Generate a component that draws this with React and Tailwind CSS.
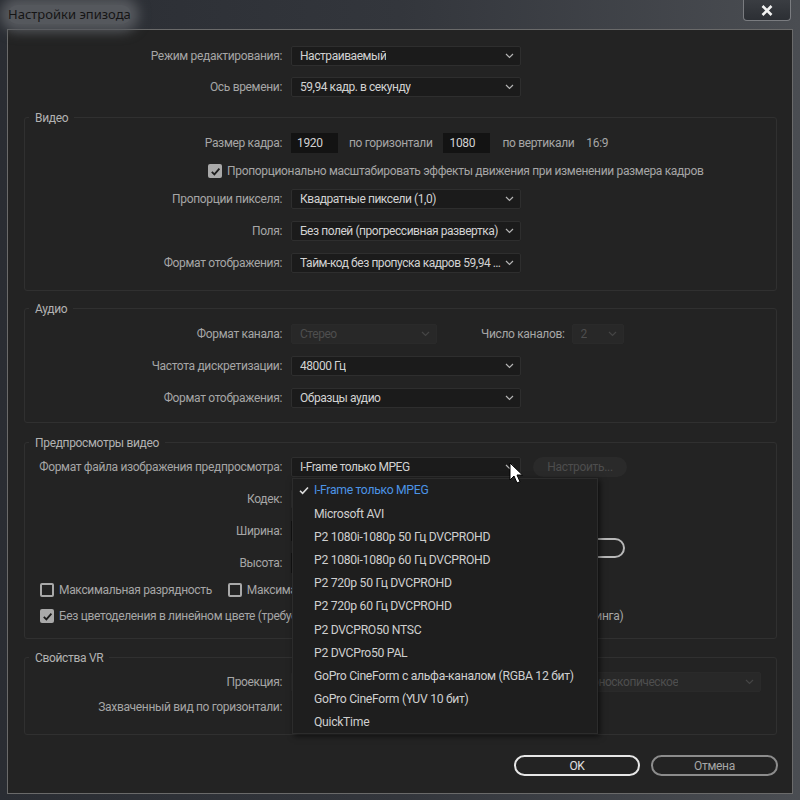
import React from "react";

const Chevron = ({ color = "#b4b4b4" }) => (
  <svg width="9" height="6" viewBox="0 0 9 6" className="shrink-0">
    <path d="M1 1l3.5 3.5L8 1" fill="none" stroke={color} strokeWidth="1.2" />
  </svg>
);

const Select = ({ value, w = "w-[230px]", disabled }) => (
  <div
    className={`${w} h-[20px] shrink-0 flex items-center justify-between gap-[3px] pl-[8px] pr-[6px] rounded-[2px] border tracking-[-0.45px] ${
      disabled
        ? "bg-[#282828] border-[#2a2a2a] text-[#4e4e4e]"
        : "bg-[#1b1b1b] border-[#2e2e2e] text-[#d2d2d2]"
    }`}
  >
    <span className="truncate">{value}</span>
    <Chevron color={disabled ? "#454545" : "#b4b4b4"} />
  </div>
);

const Check = ({ checked }) => (
  <div
    className={`w-[14px] h-[14px] shrink-0 rounded-[2px] flex items-center justify-center ${
      checked ? "bg-[#a9a9a9]" : "border-2 border-[#a9a9a9]"
    }`}
  >
    {checked && (
      <svg width="11" height="11" viewBox="0 0 11 11">
        <path d="M1.8 5.8l2.6 2.6L9.4 2.6" fill="none" stroke="#1c1c1c" strokeWidth="1.8" />
      </svg>
    )}
  </div>
);

const Row = ({ label, lw = "w-[266px]", children, className = "" }) => (
  <div className={`flex items-center h-[20px] ${className}`}>
    <div className={`${lw} shrink-0 text-right pr-[9px] text-[#a6a6a6] whitespace-nowrap`}>{label}</div>
    {children}
  </div>
);

const Group = ({ title, className = "", children }) => (
  <div className={`relative ml-[16px] w-[753px] border border-[#303030] rounded-[3px] ${className}`}>
    <div className="absolute left-[4px] top-[-10px] px-[6px] bg-[#232323] text-[#b2b2b2] leading-[20px]">
      {title}
    </div>
    {children}
  </div>
);

const Input = ({ value, className = "" }) => (
  <div className={`w-[47px] h-[20px] shrink-0 bg-[#131313] text-[#d2d2d2] pl-[6px] flex items-center ${className}`}>
    {value}
  </div>
);

const items = [
  "I-Frame только MPEG",
  "Microsoft AVI",
  "P2 1080i-1080p 50 Гц DVCPROHD",
  "P2 1080i-1080p 60 Гц DVCPROHD",
  "P2 720p 50 Гц DVCPROHD",
  "P2 720p 60 Гц DVCPROHD",
  "P2 DVCPRO50 NTSC",
  "P2 DVCPro50 PAL",
  "GoPro CineForm с альфа-каналом (RGBA 12 бит)",
  "GoPro CineForm (YUV 10 бит)",
  "QuickTime",
];

export default function App() {
  return (
    <div
      className="relative w-[800px] h-[800px] overflow-hidden bg-gradient-to-r from-[#2a2d33] via-[#33363c] to-[#4a4d52] text-[12px] tracking-[-0.33px]"
      style={{ fontFamily: "Roboto, 'Noto Sans', sans-serif" }}
    >
      {/* title bar */}
      <div className="h-[29px] flex items-center pl-[8px] relative">
        <span
          className="text-[#151515] text-[13px] tracking-normal rounded-[10px] bg-[#55585d] shadow-[0_0_12px_8px_#55585d]"
          style={{ fontFamily: "'Noto Sans', sans-serif" }}
        >
          Настройки эпизода
        </span>
        <div className="absolute right-[9px] top-0 w-[48px] h-[21px] rounded-b-[4px] border border-t-0 border-[#7a7c80] bg-gradient-to-b from-[#3a3d42] to-[#2c2f34] flex items-center justify-center">
          <svg width="12" height="11" viewBox="0 0 12 11">
            <path d="M1.5 1l9 9M10.5 1l-9 9" stroke="#f2f2f2" strokeWidth="2.6" />
          </svg>
        </div>
      </div>

      {/* client */}
      <div className="ml-[7px] w-[786px] h-[765px] border border-[#6a6a6a] bg-[#232323]">
        <div className="pt-[16px]">
          <Row label="Режим редактирования:" lw="w-[283px]">
            <Select value="Настраиваемый" />
          </Row>
          <Row label="Ось времени:" lw="w-[283px]" className="mt-[11px]">
            <Select value="59,94  кадр. в секунду" />
          </Row>
        </div>

        <Group title="Видео" className="mt-[20px] pt-[15px] pb-[17px]">
          <Row label="Размер кадра:">
            <Input value="1920" />
            <span className="ml-[11px] text-[#a6a6a6]">по горизонтали</span>
            <Input value="1080" className="ml-[11px]" />
            <span className="ml-[12px] text-[#a6a6a6]">по вертикали</span>
            <span className="ml-[12px] text-[#a6a6a6]">16:9</span>
          </Row>
          <div className="flex items-center h-[20px] mt-[8px] pl-[183px] text-[#a6a6a6]">
            <Check checked />
            <span className="ml-[5px] whitespace-nowrap">
              Пропорционально масштабировать эффекты движения при изменении размера кадров
            </span>
          </div>
          <Row label="Пропорции пикселя:" className="mt-[8px]">
            <Select value="Квадратные пиксели (1,0)" />
          </Row>
          <Row label="Поля:" className="mt-[12px]">
            <Select value="Без полей (прогрессивная развертка)" />
          </Row>
          <Row label="Формат отображения:" className="mt-[12px]">
            <Select value="Тайм-код без пропуска кадров 59,94 к/с" />
          </Row>
        </Group>

        <Group title="Аудио" className="mt-[17px] pt-[15px] pb-[14px]">
          <Row label="Формат канала:">
            <Select value="Стерео" w="w-[146px]" disabled />
            <span className="ml-[44px] text-[#a6a6a6]">Число каналов:</span>
            <div className="ml-[7px]">
              <Select value="2" w="w-[52px]" disabled />
            </div>
          </Row>
          <Row label="Частота дискретизации:" className="mt-[12px]">
            <Select value="48000 Гц" />
          </Row>
          <Row label="Формат отображения:" className="mt-[12px]">
            <Select value="Образцы аудио" />
          </Row>
        </Group>

        <Group title="Предпросмотры видео" className="mt-[19px] pt-[14px] pb-[12px]">
          <Row label="Формат файла изображения предпросмотра:">
            <Select value="I-Frame только MPEG" />
            <div className="ml-[12px] w-[94px] h-[20px] rounded-full bg-[#2a2a2a] text-[#4d4d4d] flex items-center justify-center">
              Настроить...
            </div>
          </Row>
          <Row label="Кодек:" className="mt-[12px]">
            <Select value="" />
          </Row>
          <Row label="Ширина:" className="mt-[12px]">
            <Input value="" />
          </Row>
          <Row label="Высота:" className="mt-[12px]">
            <Input value="" />
          </Row>
          <div className="absolute left-[535px] top-[95px] w-[65px] h-[20px] rounded-full border-2 border-[#b8b8b8]" />
          <div className="flex items-center h-[20px] mt-[7px] pl-[15px] text-[#a6a6a6] whitespace-nowrap">
            <Check />
            <span className="ml-[5px]">Максимальная разрядность</span>
            <div className="ml-[16px]">
              <Check />
            </div>
            <span className="ml-[5px]">Максимальное качество</span>
          </div>
          <div className="flex items-center h-[20px] mt-[6px] pl-[15px] text-[#a6a6a6] whitespace-nowrap">
            <Check checked />
            <span className="ml-[5px]">
              Без цветоделения в линейном цвете (требуется ускорение GPU или максимальное качество рендеринга)
            </span>
          </div>
        </Group>

        <Group title="Свойства VR" className="mt-[18px] pt-[14px] pb-[17px]">
          <Row label="Проекция:">
            <Select value="" w="w-[150px]" disabled />
            <div className="ml-[132px]">
              <Select value="Моноскопическое" w="w-[188px]" disabled />
            </div>
          </Row>
          <Row label="Захваченный вид по горизонтали:" className="mt-[5px]" />
        </Group>

        <div className="flex justify-end gap-[11px] pr-[14px] mt-[20px]">
          <div className="w-[126px] h-[21px] rounded-full border-2 border-[#e6e6e6] text-[#e0e0e0] flex items-center justify-center">
            OK
          </div>
          <div className="w-[127px] h-[21px] rounded-full border-2 border-[#8c8c8c] text-[#a6a6a6] flex items-center justify-center">
            Отмена
          </div>
        </div>
      </div>

      {/* dropdown menu */}
      <div className="absolute left-[292px] top-[478px] w-[306px] h-[256px] bg-[#1e1e1e] border border-[#2c2c2c] shadow-[2px_2px_6px_rgba(0,0,0,0.6)] text-[12.2px] tracking-[-0.3px]">
        {items.map((t, i) => (
          <div key={t} className="h-[23.2px] flex items-center whitespace-nowrap">
            <div className="w-[21px] shrink-0 flex justify-center">
              {i === 0 && (
                <svg width="10" height="9" viewBox="0 0 10 9">
                  <path d="M1 4.8l2.6 2.6L9 1.5" fill="none" stroke="#dcdcdc" strokeWidth="1.6" />
                </svg>
              )}
            </div>
            <span className={i === 0 ? "text-[#4c94e6]" : "text-[#cfcfcf]"}>{t}</span>
          </div>
        ))}
      </div>

      {/* cursor */}
      <svg className="absolute left-[509px] top-[462px]" width="14" height="22" viewBox="0 0 14 22">
        <path d="M1 1v17l4-4 3 7 3-1.3-3-6.7h5.5z" fill="#fff" stroke="#000" strokeWidth="1" />
      </svg>
    </div>
  );
}
